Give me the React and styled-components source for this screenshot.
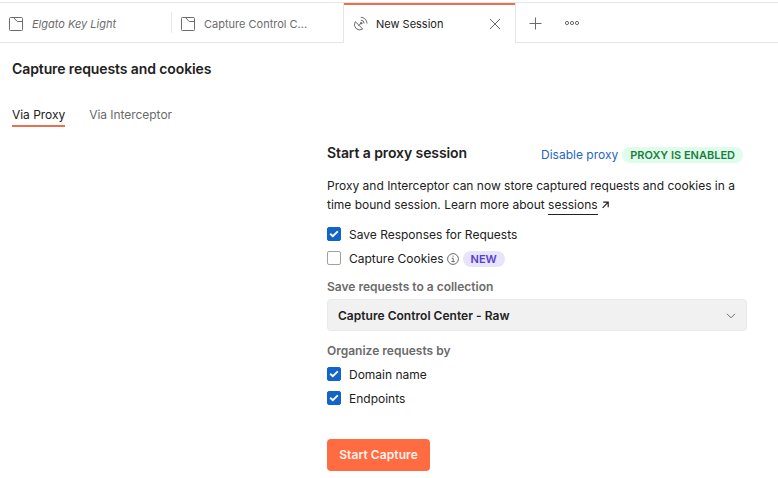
import React from "react";
import styled, { createGlobalStyle, css } from "styled-components";

const GlobalStyle = createGlobalStyle`
  *, *::before, *::after { box-sizing: border-box; }
  body {
    margin: 0;
    background: #fff;
    color: #212121;
    font: 400 12px/18px Inter, "Liberation Sans", sans-serif;
    overflow: hidden;
  }
  h1, h2, p { margin: 0; }
  svg { display: block; flex: none; }
`;

const Page = styled.div`
  width: 778px;
  height: 478px;
  padding-top: 2px;
`;

const TabStrip = styled.nav`
  display: flex;
  height: 41px;
  border-top: 1px solid #e6e6e6;
  border-bottom: 1px solid #e6e6e6;
`;

const Tab = styled.div`
  display: flex;
  align-items: center;
  width: ${(p) => p.$width}px;
  height: 39px;
  padding: 2px 14px 0 8px;
  gap: 8px;
  font-size: 11px;
  white-space: nowrap;
  color: #6b6b6b;
  font-style: ${(p) => (p.$preview ? "italic" : "normal")};
  ${(p) =>
    p.$active &&
    css`
      height: 40px;
      padding-top: 2px;
      background: #fff;
      color: #212121;
      border-left: 1px solid #e6e6e6;
      border-right: 1px solid #e6e6e6;
      box-shadow: inset 0 2px 0 #e8704f;
    `}
`;

const TabDivider = styled.span`
  width: 1px;
  height: 21px;
  margin-top: 9px;
  background: #e9e9e9;
`;

const TabLabel = styled.span`
  flex: 1;
`;

const StripActions = styled.div`
  display: flex;
  align-items: center;
  gap: 22px;
  padding: 1px 0 0 13px;
`;

const Title = styled.h1`
  padding: 16px 12px 0;
  font-size: 14px;
  line-height: 20px;
  font-weight: 600;
  letter-spacing: -0.1px;
`;

const ModeTabs = styled.div`
  display: flex;
  gap: 24px;
  padding: 27px 12px 0;
`;

const ModeTab = styled.span`
  height: 21px;
  letter-spacing: -0.04px;
  color: ${(p) => (p.$active ? "#212121" : "#6b6b6b")};
  border-bottom: 2px solid ${(p) => (p.$active ? "#e8704f" : "transparent")};
`;

const Panel = styled.main`
  width: 420px;
  margin: 18px 0 0 327px;
`;

const PanelHeader = styled.header`
  display: flex;
  align-items: center;
  height: 20px;
  padding-right: 4px;
`;

const PanelTitle = styled.h2`
  flex: 1;
  font-size: 14px;
  line-height: 20px;
  font-weight: 600;
  letter-spacing: -0.1px;
  margin-bottom: 4px;
`;

const BlueLink = styled.a`
  color: #1f66c4;
  line-height: 20px;
  margin-right: 4px;
`;

const Badge = styled.span`
  height: 16px;
  padding: 0 8px;
  border-radius: 8px;
  font-size: 11px;
  line-height: 16px;
  font-weight: 600;
  color: ${(p) => (p.$tone === "green" ? "#1b7f3f" : "#5440cf")};
  background: ${(p) => (p.$tone === "green" ? "#e0fdec" : "#e7e4fb")};
`;

const Description = styled.p`
  margin-top: 11px;
  line-height: 19px;
  white-space: nowrap;
`;

const DocLink = styled.a`
  display: inline-block;
  height: 20px;
  border-bottom: 1px solid #212121;
`;

const LinkArrow = styled.span`
  display: inline-block;
  margin-left: 4px;
`;

const Option = styled.label`
  display: flex;
  align-items: center;
  height: 24px;
`;

const Box = styled.span`
  display: grid;
  place-items: center;
  width: 14px;
  height: 14px;
  margin: 0 8px 2px 0;
  border-radius: 2px;
  border: 1px solid ${(p) => (p.$checked ? "#1264c8" : "#a0a0a0")};
  background: ${(p) => (p.$checked ? "#1264c8" : "#fff")};
`;

const OptionHint = styled.span`
  display: flex;
  align-items: center;
  gap: 4px;
  margin-left: 3px;
`;

const Options = styled.div`
  padding-top: ${(p) => p.$top}px;
`;

const FieldLabel = styled.div`
  margin-top: ${(p) => p.$top}px;
  font-weight: 600;
  color: #6b6b6b;
`;

const Select = styled.div`
  display: flex;
  align-items: center;
  justify-content: space-between;
  height: 32px;
  margin-top: 3px;
  padding: 1px 10px 0 10px;
  border: 1px solid #e9e9e9;
  border-radius: 4px;
  background: #f1f1f1;
  font-weight: 600;
  letter-spacing: 0.03px;
`;

const PrimaryButton = styled.button`
  display: block;
  width: 103px;
  height: 32px;
  margin-top: 28px;
  padding: 0;
  border: 0;
  border-radius: 4px;
  background: #ff6c42;
  color: #fff3ee;
  font: 600 12px/32px Inter, "Liberation Sans", sans-serif;
  letter-spacing: 0.08px;
`;

const CollectionIcon = () => (
  <svg width="16" height="16" viewBox="0 0 16 16" fill="none" stroke="#6b6b6b">
    <path d="M2.5 1.5H13.5Q14.5 1.5 14.5 2.5V13.5Q14.5 14.5 13.5 14.5H2.5Q1.5 14.5 1.5 13.5V2.5Q1.5 1.5 2.5 1.5ZM5.5 1.5L9.2 5.5H14.5" />
  </svg>
);

const SatelliteIcon = () => (
  <svg width="16" height="16" viewBox="0 0 16 16" fill="none" stroke="#6b6b6b" strokeLinecap="round">
    <path d="M3.1 6A5.3 5.3 0 0 0 10.4 13.2ZM6.7 9.6L9 7.3" />
    <path d="M9.2 4.2A2.9 2.9 0 0 1 12.1 7.1M9.2 1.3A5.8 5.8 0 0 1 15 7.1" />
    <circle cx="9.1" cy="7.2" r="0.8" fill="#6b6b6b" />
  </svg>
);

const CloseIcon = () => (
  <svg width="12" height="12" viewBox="0 0 12 12" stroke="#6b6b6b">
    <path d="M1 1L11 11M11 1L1 11" />
  </svg>
);

const PlusIcon = () => (
  <svg width="13" height="13" viewBox="0 0 13 13" stroke="#6b6b6b">
    <path d="M6.5 0.5V12.5M0.5 6.5H12.5" />
  </svg>
);

const MoreIcon = () => (
  <svg width="16" height="6" viewBox="0 0 16 6" fill="none" stroke="#6b6b6b">
    <circle cx="3" cy="3" r="1.6" />
    <circle cx="8" cy="3" r="1.6" />
    <circle cx="13" cy="3" r="1.6" />
  </svg>
);

const CheckIcon = () => (
  <svg width="12" height="12" viewBox="0 0 12 12" fill="none" stroke="#fff" strokeWidth="1.9">
    <path d="M2.2 5.8L4.8 8.3L9.8 3.4" />
  </svg>
);

const InfoIcon = () => (
  <svg width="12" height="12" viewBox="0 0 12 12" fill="none" stroke="#6b6b6b">
    <circle cx="6" cy="6" r="5.4" />
    <path d="M4.7 5.2H6.2V8.6M4.4 8.6H7.8M5.5 3.2H6.6" />
  </svg>
);

const ChevronIcon = () => (
  <svg width="10" height="6" viewBox="0 0 10 6" fill="none" stroke="#6b6b6b">
    <path d="M1 0.8L5 4.8L9 0.8" />
  </svg>
);

const ArrowIcon = () => (
  <svg width="7" height="8" viewBox="0 0 7 8" fill="none" stroke="#212121" strokeWidth="1.2">
    <path d="M0.6 6.8L6 1.4M1.2 1.2H6.2V6.2" />
  </svg>
);

const Checkbox = ({ checked, label, children }) => (
  <Option>
    <Box $checked={checked}>{checked && <CheckIcon />}</Box>
    {label}
    {children}
  </Option>
);

export default function App() {
  return (
    <>
      <GlobalStyle />
      <Page>
        <TabStrip>
          <Tab $width={171} $preview>
            <CollectionIcon />
            <TabLabel>Elgato Key Light</TabLabel>
          </Tab>
          <TabDivider />
          <Tab $width={171}>
            <CollectionIcon />
            <TabLabel>Capture Control C...</TabLabel>
          </Tab>
          <Tab $width={173} $active>
            <SatelliteIcon />
            <TabLabel>New Session</TabLabel>
            <CloseIcon />
          </Tab>
          <StripActions>
            <PlusIcon />
            <MoreIcon />
          </StripActions>
        </TabStrip>
        <Title>Capture requests and cookies</Title>
        <ModeTabs>
          <ModeTab $active>Via Proxy</ModeTab>
          <ModeTab>Via Interceptor</ModeTab>
        </ModeTabs>
        <Panel>
          <PanelHeader>
            <PanelTitle>Start a proxy session</PanelTitle>
            <BlueLink>Disable proxy</BlueLink>
            <Badge $tone="green">PROXY IS ENABLED</Badge>
          </PanelHeader>
          <Description>
            Proxy and Interceptor can now store captured requests and cookies in a
            <br />
            time bound session. Learn more about <DocLink>sessions</DocLink>
            <LinkArrow>
              <ArrowIcon />
            </LinkArrow>
          </Description>
          <Options $top={8}>
            <Checkbox checked label="Save Responses for Requests" />
            <Checkbox label="Capture Cookies">
              <OptionHint>
                <InfoIcon />
                <Badge $tone="violet">NEW</Badge>
              </OptionHint>
            </Checkbox>
          </Options>
          <FieldLabel $top={7}>Save requests to a collection</FieldLabel>
          <Select>
            Capture Control Center - Raw
            <ChevronIcon />
          </Select>
          <FieldLabel $top={11}>Organize requests by</FieldLabel>
          <Options $top={3}>
            <Checkbox checked label="Domain name" />
            <Checkbox checked label="Endpoints" />
          </Options>
          <PrimaryButton>Start Capture</PrimaryButton>
        </Panel>
      </Page>
    </>
  );
}
